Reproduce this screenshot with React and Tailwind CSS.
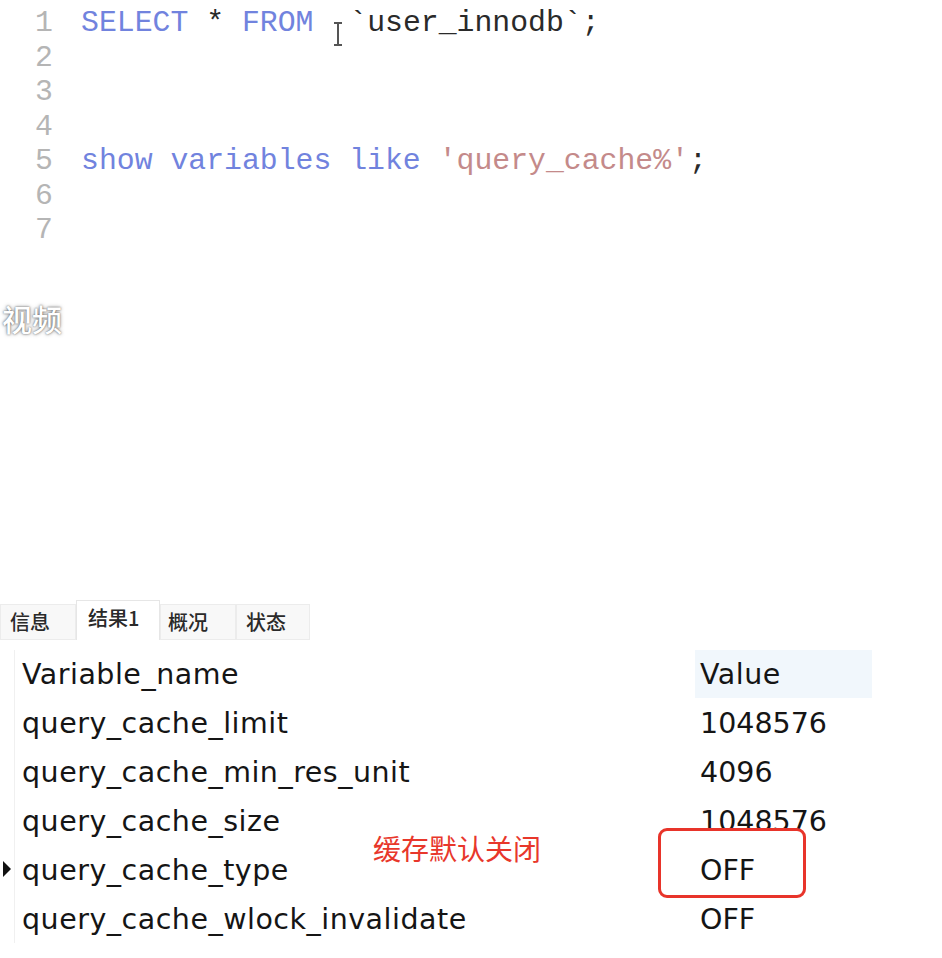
import React from "react";

const mono = { fontFamily: '"Liberation Mono", "DejaVu Sans Mono", monospace' };

function CodeLine({ n, children }) {
  return (
    <div className="flex h-[34.5px] items-center">
      <div className="w-[53px] text-right text-[#b5b5b5]">{n}</div>
      <div className="ml-[28px] whitespace-pre text-[#2a2a2a]">{children}</div>
    </div>
  );
}

const KW = ({ children }) => <span className="text-[#7183de]">{children}</span>;
const STR = ({ children }) => <span className="text-[#c48a8a]">{children}</span>;

const rows = [
  ["query_cache_limit", "1048576"],
  ["query_cache_min_res_unit", "4096"],
  ["query_cache_size", "1048576"],
  ["query_cache_type", "OFF"],
  ["query_cache_wlock_invalidate", "OFF"],
];

export default function App() {
  return (
    <div className="relative h-[958px] w-[942px] overflow-hidden bg-white">
      {/* editor */}
      <div className="pt-[7px] text-[29.8px] leading-none" style={mono}>
        <CodeLine n="1">
          <KW>SELECT</KW> * <KW>FROM</KW> {"\u00a0"}`user_innodb`;
        </CodeLine>
        <CodeLine n="2" />
        <CodeLine n="3" />
        <CodeLine n="4" />
        <CodeLine n="5">
          <KW>show variables like</KW> <STR>'query_cache%'</STR>;
        </CodeLine>
        <CodeLine n="6" />
        <CodeLine n="7" />
      </div>

      {/* I-beam cursor */}
      <svg className="absolute left-[331px] top-[20px]" width="14" height="28" viewBox="0 0 14 28">
        <path d="M3 3h8M7 3v22M3 25h8" stroke="#555" strokeWidth="2" fill="none" />
      </svg>

      {/* subtitle label */}
      <div
        className="mt-[51px] pl-[2px] text-[30px] font-medium leading-[36px] text-white [text-shadow:0_0_2px_rgba(0,0,0,0.6),0_0_4px_rgba(0,0,0,0.35)]"
        style={{ fontFamily: '"Noto Sans CJK SC", sans-serif' }}
      >
        视频
      </div>

      {/* tabs */}
      <div
        className="mt-[264px] flex h-[40px] items-end text-[20px] font-medium text-[#2a2a2a]"
        style={{ fontFamily: '"Noto Sans CJK SC", sans-serif' }}
      >
        <div className="flex h-[36px] w-[76px] items-center border border-[#ececec] bg-[#f8f8f8] pl-[9px]">信息</div>
        <div className="flex h-[40px] w-[84px] items-center border border-b-0 border-[#e6e6e6] bg-white pb-[4px] pl-[11px]">结果1</div>
        <div className="flex h-[36px] w-[76px] items-center border border-[#ececec] bg-[#f8f8f8] pl-[7px]">概况</div>
        <div className="flex h-[36px] w-[74px] items-center border border-[#ececec] bg-[#f8f8f8] pl-[9px]">状态</div>
      </div>

      {/* table */}
      <div
        className="mt-[10px] text-[28.5px] tracking-[0.5px] text-[#151515]"
        style={{ fontFamily: '"DejaVu Sans", "Noto Sans", sans-serif' }}
      >
        <div className="flex h-[48px] items-center">
          <div className="w-[15px] self-stretch border-r border-[#f0f0f0]" />
          <div className="w-[680px] pl-[7px] pt-[4px]">Variable_name</div>
          <div className="flex h-full w-[177px] items-center bg-[#f1f7fc] pl-[5px] pt-[4px]">Value</div>
        </div>
        {rows.map(([name, val], i) => (
          <div key={name} className="flex h-[49px] items-center">
            <div className="flex w-[15px] items-center justify-center self-stretch border-r border-[#f0f0f0]">
              {i === 3 && (
                <svg width="10" height="18" viewBox="0 0 10 18">
                  <path d="M1 1 L9 9 L1 17 Z" fill="#111" />
                </svg>
              )}
            </div>
            <div className="w-[680px] pl-[7px] pt-[4px]">{name}</div>
            <div className="w-[177px] pl-[5px] pt-[4px] tracking-normal">{val}</div>
          </div>
        ))}
      </div>

      {/* annotation */}
      <div
        className="absolute left-[373px] top-[830px] text-[28px] leading-[36px] text-[#e8372b]"
        style={{ fontFamily: '"Noto Sans CJK SC", sans-serif' }}
      >
        缓存默认关闭
      </div>
      <div className="absolute left-[658px] top-[828px] h-[70px] w-[148px] rounded-[9px] border-[3px] border-[#e8342a]" />
    </div>
  );
}
